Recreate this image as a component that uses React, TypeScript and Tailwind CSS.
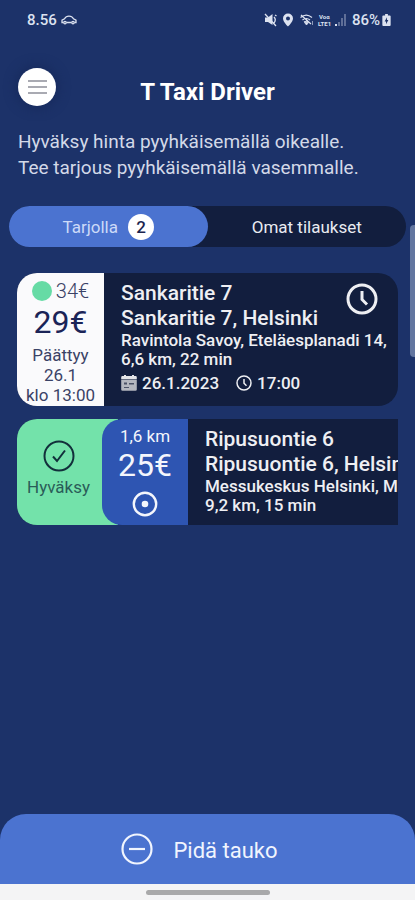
import type { ReactNode } from "react";

function ClockIcon({ className, stroke = 2 }: { className?: string; stroke?: number }) {
  return (
    <svg viewBox="0 0 32 32" fill="none" stroke="currentColor" strokeWidth={stroke} className={className} aria-hidden="true">
      <circle cx="16" cy="16" r="14" />
      <path d="M16 8v8.500l5 5" />
    </svg>
  );
}

function CalendarIcon() {
  return (
    <svg viewBox="0 0 16 16" className="size-4" aria-hidden="true">
      <path d="M3 0h2v1h6V0h2v1h1.500a1.300 1.300 0 0 1 1.300 1.300V4H.2V2.300A1.300 1.300 0 0 1 1.500 1H3z" fill="#e3e4e8" />
      <path d="M.2 4.500h15.600v10a1.300 1.300 0 0 1-1.300 1.300h-13A1.300 1.300 0 0 1 .2 14.500z" fill="#b4b7bf" />
      <path d="M3 7.500h3v2H3zM8 8h5v1.500H8zM3 12h5v1H3z" fill="#4b5267" />
    </svg>
  );
}

function StatusBar() {
  return (
    <div className="flex h-10 items-center justify-between pr-6 pl-[27px] text-[15px] leading-5 font-medium text-[#dce2f0]">
      <div className="flex items-center gap-1">
        <span>8.56</span>
        <svg viewBox="0 0 16 10" className="h-[10px] w-4" fill="none" stroke="currentColor" strokeWidth="1.300" aria-hidden="true">
          <path d="M2.500 7.500H1V5.200l2.500-1.400C4.500 2 5.500 1.200 8 1.200s3.500.8 4.500 2.600L15 5.200v2.300h-1.500M5.500 7.500h5" />
          <circle cx="4" cy="7.600" r="1.200" />
          <circle cx="12" cy="7.600" r="1.200" />
        </svg>
      </div>
      <div className="flex items-center">
        <svg viewBox="0 0 84 16" className="mr-1 h-4 w-[84px]" fill="none" stroke="currentColor" aria-hidden="true">
          <path d="M1 5.500h3L8.500 2v11L4 10H1z" fill="currentColor" stroke="none" />
          <path d="M1 2l11 12M10 5c1.500 1.500 1.500 4 0 6M11 3l1.500 1" strokeWidth="1.300" />
          <path d="M24 1.500a5 5 0 0 0-5 5c0 3.500 5 8 5 8s5-4.500 5-8a5 5 0 0 0-5-5zm0 3a2 2 0 1 1 0 4 2 2 0 0 1 0-4z" fill="currentColor" stroke="none" />
          <path d="M36.500 5.500c3.500-3 8-3 11.500 0M38.500 8c2.500-2 5-2 7.500 0M40 10c1.500-1 3-1 4.500 0M37 3l10 9" strokeWidth="1.200" />
          <path d="M42.500 13l-2-2.500h4z" fill="currentColor" strokeWidth=".8" />
          <path d="M48.500 9v4" strokeWidth="1" opacity=".6" />
          <g fill="currentColor" stroke="none" fontFamily="Roboto, sans-serif" fontSize="6" fontWeight="700">
            <text x="55" y="7">Voα</text>
            <text x="54" y="14">LTE1</text>
          </g>
          <path d="M72 12v2" strokeWidth="2" />
          <path d="M75 10v4M78 6v8M81 2v12" strokeWidth="2" opacity=".35" />
        </svg>
        <span>86%</span>
        <svg viewBox="0 0 9 13" className="ml-[2px] h-3 w-[9px]" aria-hidden="true">
          <path d="M3 0h3v1.500h2a1 1 0 0 1 1 1V12a1 1 0 0 1-1 1H1a1 1 0 0 1-1-1V2.500a1 1 0 0 1 1-1h2z" fill="currentColor" />
          <path d="M5 3.500L2.500 8H4v3l2.500-4.500H5z" fill="#1c3267" />
        </svg>
      </div>
    </div>
  );
}

type RideInfoProps = {
  street: string;
  city: string;
  destination: ReactNode;
  distance: string;
};

function RideInfo({ street, city, destination, distance }: RideInfoProps) {
  return (
    <>
      <h2 className="text-[21px] leading-[25px] font-medium">{street}</h2>
      <p className="text-[21px] leading-[25px] font-medium">{city}</p>
      <p className="text-[17px] leading-[19px] font-medium">{destination}</p>
      <p className="text-[17px] leading-[19px] font-medium">{distance}</p>
    </>
  );
}

function ScheduledRide() {
  return (
    <article className="flex h-[133px] overflow-hidden rounded-[20px] bg-[#121e3e]">
      <div className="w-[87px] shrink-0 bg-[#fafafc] pt-[6px] text-center text-[#3a4266]">
        <div className="flex items-center justify-center gap-1 text-[20px] leading-6 font-light">
          <span className="size-5 rounded-full bg-[#66dba5]" />
          34€
        </div>
        <div className="text-[32px] leading-[38px] text-[#1b2457]">29€</div>
        <div className="mt-[4px] text-[17px] leading-5 whitespace-nowrap">
          Päättyy
          <br />
          26.1
          <br />
          klo 13:00
        </div>
      </div>
      <div className="relative min-w-0 flex-1 pt-2 pl-[17px] text-[#eeeff3]">
        <RideInfo
          street="Sankaritie 7"
          city="Sankaritie 7, Helsinki"
          destination={<span className="whitespace-nowrap">Ravintola Savoy, Eteläesplanadi 14,</span>}
          distance="6,6 km, 22 min"
        />
        <div className="mt-1 flex items-center text-[17px] leading-5 font-medium">
          <CalendarIcon />
          <span className="ml-[5px]">26.1.2023</span>
          <ClockIcon className="ml-[17px] size-4" stroke={3} />
          <span className="ml-[5px]">17:00</span>
        </div>
        <ClockIcon className="absolute top-[10px] right-5 size-8" stroke={3} />
      </div>
    </article>
  );
}

function SwipedRide() {
  return (
    <article className="flex h-[106px] overflow-hidden rounded-l-[20px] bg-[#121e3e]">
      <button type="button" className="flex w-[101px] shrink-0 flex-col items-center bg-[#73e2aa] pt-[21px] pr-[18px] text-[17px] leading-5 text-[#2a5c58]">
        <svg viewBox="0 0 32 32" className="size-8 text-[#12303b]" fill="none" stroke="currentColor" strokeWidth="2" aria-hidden="true">
          <circle cx="16" cy="16" r="14.500" />
          <path d="M10 16.500l4 4.500 8-10.500" />
        </svg>
        <span className="mt-[5px]">Hyväksy</span>
      </button>
      <div className="-ml-4 flex w-[86px] shrink-0 flex-col items-center rounded-l-[20px] bg-[#2e55b2] pt-[7px] text-[#f4f6fc]">
        <span className="text-[17px] leading-5">1,6 km</span>
        <span className="text-[32px] leading-[38px]">25€</span>
        <svg viewBox="0 0 26 26" className="mt-[7px] size-[26px]" fill="none" stroke="currentColor" strokeWidth="2.400" aria-hidden="true">
          <circle cx="13" cy="13" r="11.200" />
          <circle cx="13" cy="13" r="3.300" fill="currentColor" stroke="none" />
        </svg>
      </div>
      <div className="min-w-0 flex-1 overflow-hidden pt-2 pl-[17px] whitespace-nowrap text-[#eeeff3]">
        <RideInfo
          street="Ripusuontie 6"
          city="Ripusuontie 6, Helsinki"
          destination="Messukeskus Helsinki, Messuaukio 1"
          distance="9,2 km, 15 min"
        />
      </div>
    </article>
  );
}

export default function App() {
  return (
    <div className="relative flex min-h-screen flex-col overflow-hidden bg-[#1c3269] font-[Roboto,sans-serif]">
      <StatusBar />

      <header className="mt-7 grid grid-cols-[38px_1fr_38px] items-center px-[18px]">
        <button
          type="button"
          aria-label="Valikko"
          className="flex size-[38px] flex-col items-center justify-center gap-1 rounded-full bg-white shadow-[0_0_12px_2px_#172a5c]"
        >
          <span className="h-[2px] w-[19px] bg-[#a9aab2]" />
          <span className="h-[2px] w-[19px] bg-[#a9aab2]" />
          <span className="h-[2px] w-[19px] bg-[#a9aab2]" />
        </button>
        <h1 className="pt-[10px] text-center text-[24px] leading-7 font-bold text-white">T Taxi Driver</h1>
      </header>

      <p className="mt-[23px] px-[18px] text-[19px] leading-[26px] whitespace-nowrap text-[#d3d9e8]">
        Hyväksy hinta pyyhkäisemällä oikealle.
        <br />
        Tee tarjous pyyhkäisemällä vasemmalle.
      </p>

      <div className="mx-[9px] mt-[25px] flex h-[41px] shrink-0 rounded-full bg-[#121e3e] text-[17px] leading-6">
        <button type="button" className="flex flex-1 items-center justify-center gap-[10px] rounded-full bg-[#4b73d0] text-[#ccdaf8]">
          Tarjolla
          <span className="flex size-[26px] items-center justify-center rounded-full bg-white font-medium text-[#1c2550]">2</span>
        </button>
        <button type="button" className="flex-1 text-[#e9ebf1]">
          Omat tilaukset
        </button>
      </div>

      <main className="mt-[26px] flex flex-col gap-[13px] px-[17px]">
        <ScheduledRide />
        <SwipedRide />
      </main>

      {/* edge panel handle over the right side */}
      <div className="absolute top-[225px] right-0 h-[132px] w-[5px] rounded-l-[4px] bg-[#62759f]" />

      <footer className="mt-auto">
        <button
          type="button"
          className="flex h-[70px] w-full items-center justify-center gap-5 rounded-t-[26px] bg-[#4b73d0] pr-4 text-[22px] leading-7 text-[#f1f5fe]"
        >
          <svg viewBox="0 0 32 32" className="size-8" fill="none" stroke="currentColor" strokeWidth="2.200" aria-hidden="true">
            <circle cx="16" cy="16" r="14.500" />
            <path d="M8 16h16" />
          </svg>
          <span className="pt-1">Pidä tauko</span>
        </button>
        <div className="flex h-4 items-center justify-center bg-[#f4f4f5]">
          <span className="h-[5px] w-[124px] rounded-full bg-[#a9a9aa]" />
        </div>
      </footer>
    </div>
  );
}
